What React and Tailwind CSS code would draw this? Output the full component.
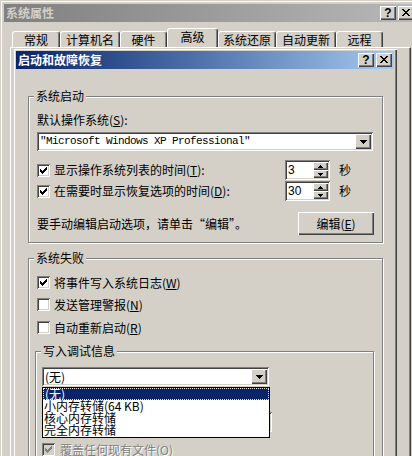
import React from "react";

const SUNKEN =
  "shadow-[inset_1px_1px_0_#808080,inset_-1px_-1px_0_#fff,inset_2px_2px_0_#404040,inset_-2px_-2px_0_#d4d0c8]";
const RAISED =
  "shadow-[inset_1px_1px_0_#fff,inset_-1px_-1px_0_#404040,inset_-2px_-2px_0_#808080]";
const CAPBTN =
  "shadow-[inset_1px_1px_0_#fff,inset_-1px_-1px_0_#404040,inset_-2px_-2px_0_#808080]";

function Check({ color = "#000" }) {
  const cols = [
    [3, 5],
    [4, 6],
    [5, 7],
    [6, 6],
    [7, 5],
    [8, 4],
    [9, 3],
  ];
  return (
    <svg
      width="13"
      height="13"
      viewBox="0 0 13 13"
      shapeRendering="crispEdges"
      className="absolute left-0 top-0"
    >
      {cols.map(([x, y]) => (
        <rect key={x} x={x} y={y} width="1" height="3" fill={color} />
      ))}
    </svg>
  );
}

function CheckBox({ checked, disabled }) {
  return (
    <span
      className={`relative inline-block w-[13px] h-[13px] shrink-0 ${
        disabled ? "bg-[#d4d0c8]" : "bg-white"
      } ${SUNKEN}`}
    >
      {checked && <Check color={disabled ? "#808080" : "#000"} />}
    </span>
  );
}

function PixelRows({ rows, color = "#000" }) {
  const w = rows[0].length;
  const h = rows.length;
  return (
    <svg width={w} height={h} viewBox={`0 0 ${w} ${h}`} shapeRendering="crispEdges">
      {rows.flatMap((r, y) =>
        [...r].map((c, x) =>
          c === "1" ? (
            <rect key={`${x}-${y}`} x={x} y={y} width="1" height="1" fill={color} />
          ) : null
        )
      )}
    </svg>
  );
}

const DOWN7 = ["1111111", "0111110", "0011100", "0001000"];
const UP5 = ["00100", "01110", "11111"];
const DOWN5 = ["11111", "01110", "00100"];
const CLOSE = [
  "11000011",
  "01100110",
  "00111100",
  "00011000",
  "00111100",
  "01100110",
  "11000011",
];

function CaptionButtons() {
  return (
    <div className="flex gap-[2px]">
      <div
        className={`w-[16px] h-[14px] bg-[#d4d0c8] ${CAPBTN} flex items-center justify-center font-['Liberation_Sans',sans-serif] font-bold text-[12px] leading-[12px] pb-[1px]`}
      >
        ?
      </div>
      <div
        className={`w-[16px] h-[14px] bg-[#d4d0c8] ${CAPBTN} flex items-center justify-center pb-[1px]`}
      >
        <PixelRows rows={CLOSE} />
      </div>
    </div>
  );
}

function Tab({ label, cls, selected }) {
  return (
    <div
      className={`relative flex items-center justify-center bg-[#d4d0c8] rounded-t-[3px] border-t border-l border-white border-r border-r-[#404040] shadow-[inset_-1px_0_0_#808080] leading-[12px] ${cls} ${
        selected ? "h-[19px] z-10 pb-[3px]" : "h-[16px]"
      }`}
    >
      {label}
    </div>
  );
}

function Group({ label, className, children }) {
  return (
    <div
      className={`relative border border-[#808080] shadow-[inset_1px_1px_0_#fff,1px_1px_0_#fff] ${className}`}
    >
      <span className="absolute left-[5px] -top-[7px] px-[2px] bg-[#d4d0c8] leading-[12px] h-[12px]">
        {label}
      </span>
      {children}
    </div>
  );
}

function ComboButton() {
  return (
    <div
      className={`w-[16px] h-[15px] bg-[#d4d0c8] ${RAISED} flex items-center justify-center`}
    >
      <PixelRows rows={DOWN7} />
    </div>
  );
}

function Spin({ value }) {
  return (
    <div className={`w-[45px] h-[20px] bg-white ${SUNKEN} flex p-[2px] shrink-0`}>
      <span className="flex-1 pl-[1px] leading-[16px] font-['Liberation_Sans',sans-serif] text-[12px]">
        {value}
      </span>
      <div className="w-[15px] flex flex-col">
        <div className={`h-[8px] bg-[#d4d0c8] ${RAISED} flex items-center justify-center`}>
          <PixelRows rows={UP5} />
        </div>
        <div className={`h-[8px] bg-[#d4d0c8] ${RAISED} flex items-center justify-center`}>
          <PixelRows rows={DOWN5} />
        </div>
      </div>
    </div>
  );
}

function CheckRow({ checked, children, className = "" }) {
  return (
    <div className={`h-[13px] flex items-center pl-[8px] ${className}`}>
      <CheckBox checked={checked} />
      <span className="ml-[4px] leading-[12px]">{children}</span>
    </div>
  );
}

export default function App() {
  return (
    <div className="relative w-[412px] h-[456px] overflow-hidden bg-[#d4d0c8] text-[12px] text-black font-['Noto_Sans_CJK_SC','Noto_Sans',sans-serif]">
      {/* Outer window: 系统属性 */}
      <div className="w-[420px] h-[470px] flex flex-col p-[4px] shadow-[inset_1px_1px_0_#d4d0c8,inset_2px_2px_0_#fff]">
        <div className="h-[18px] shrink-0 flex items-center justify-between pl-[2px] pr-[2px] bg-gradient-to-r from-[#808080] to-[#b8b8b8]">
          <span className="font-bold text-[#d4d0c8] leading-[12px]">系统属性</span>
          <CaptionButtons />
        </div>
        <div className="h-[25px] shrink-0 flex items-end pl-[8px]">
          <Tab label="常规" cls="w-[48px]" />
          <Tab label="计算机名" cls="w-[60px]" />
          <Tab label="硬件" cls="w-[47px]" />
          <Tab label="高级" cls="w-[51px]" selected />
          <Tab label="系统还原" cls="w-[58px]" />
          <Tab label="自动更新" cls="w-[60px]" />
          <Tab label="远程" cls="w-[47px]" />
        </div>
        <div className="flex-1 ml-[6px] mr-[5px] border-t border-l border-white border-r border-r-[#404040] shadow-[inset_-1px_0_0_#808080]" />
      </div>

      {/* Inner dialog: 启动和故障恢复 */}
      <div className="absolute left-[13px] top-[48px] w-[384px] h-[430px] p-[3px] flex flex-col bg-[#d4d0c8] shadow-[inset_1px_1px_0_#d4d0c8,inset_2px_2px_0_#fff,inset_-1px_-1px_0_#404040,inset_-2px_-2px_0_#808080]">
        <div className="h-[18px] shrink-0 flex items-center justify-between pl-[2px] pr-[2px] bg-gradient-to-r from-[#0a246a] to-[#a6caf0]">
          <span className="font-bold text-white leading-[12px]">启动和故障恢复</span>
          <CaptionButtons />
        </div>

        <div className="flex flex-col">
          {/* 系统启动 */}
          <Group label="系统启动" className="mt-[27px] ml-[12px] w-[355px] h-[147px]">
            <div className="mt-[17px] ml-[8px] leading-[12px] h-[12px]">
              默认操作系统(<span className="underline">S</span>):
            </div>
            <div
              className={`mt-[6px] ml-[8px] w-[336px] h-[19px] bg-white ${SUNKEN} flex items-center p-[2px]`}
            >
              <span className="flex-1 pl-[1px] font-['Liberation_Mono',monospace] text-[11px] tracking-[-0.6px] leading-[15px]">
                "Microsoft Windows XP Professional"
              </span>
              <ComboButton />
            </div>
            <div className="mt-[9px] h-[20px] flex items-center pl-[8px]">
              <CheckBox checked />
              <span className="ml-[4px] w-[231px] leading-[12px]">
                显示操作系统列表的时间(<span className="underline">T</span>):
              </span>
              <Spin value="3" />
              <span className="ml-[9px] leading-[12px]">秒</span>
            </div>
            <div className="mt-[1px] h-[20px] flex items-center pl-[8px]">
              <CheckBox checked />
              <span className="ml-[4px] w-[231px] leading-[12px]">
                在需要时显示恢复选项的时间(<span className="underline">D</span>):
              </span>
              <Spin value="30" />
              <span className="ml-[9px] leading-[12px]">秒</span>
            </div>
            <div className="mt-[11px] h-[23px] flex items-center justify-between pl-[8px] pr-[8px]">
              <span className="leading-[12px]">要手动编辑启动选项，请单击“编辑”。</span>
              <div
                className={`w-[76px] h-[23px] bg-[#d4d0c8] ${RAISED} flex items-center justify-center leading-[12px]`}
              >
                编辑(<span className="underline">E</span>)
              </div>
            </div>
          </Group>

          {/* 系统失败 */}
          <Group label="系统失败" className="mt-[15px] ml-[12px] w-[355px] h-[260px]">
            <CheckRow checked className="mt-[17px]">
              将事件写入系统日志(<span className="underline">W</span>)
            </CheckRow>
            <CheckRow className="mt-[9px]">
              发送管理警报(<span className="underline">N</span>)
            </CheckRow>
            <CheckRow className="mt-[10px]">
              自动重新启动(<span className="underline">R</span>)
            </CheckRow>

            {/* 写入调试信息 */}
            <Group label="写入调试信息" className="mt-[17px] ml-[6px] w-[339px] h-[150px]">
              <div className="relative mt-[15px] ml-[6px] w-[227px]">
                <div className={`h-[19px] bg-white ${SUNKEN} flex items-center p-[2px]`}>
                  <span className="flex-1 pl-[1px] leading-[15px]">(无)</span>
                  <ComboButton />
                </div>
                {/* Open drop-down list */}
                <div className="absolute left-0 top-[20px] z-20 w-[228px] h-[51px] bg-white border border-black flex flex-col">
                  <div className="h-[12px] bg-[#0a246a] text-white border border-dotted border-[#e8e8e8] leading-[10px] pl-[1px]">
                    (无)
                  </div>
                  <div className="h-[12px] leading-[12px] pl-[1px]">小内存转储(64 KB)</div>
                  <div className="h-[12px] leading-[12px] pl-[1px]">核心内存转储</div>
                  <div className="h-[12px] leading-[12px] pl-[1px]">完全内存转储</div>
                </div>
              </div>
              {/* space of the dump-file label, hidden by the open list */}
              <div className="mt-[7px] ml-[6px] h-[12px]" />
              <div className={`mt-[7px] ml-[6px] w-[230px] h-[20px] bg-white ${SUNKEN}`} />
              <div className="mt-[11px] ml-[6px] h-[13px] flex items-center">
                <CheckBox checked disabled />
                <span className="ml-[5px] leading-[12px] text-[#808080] [text-shadow:1px_1px_0_#fff]">
                  覆盖任何现有文件(<span className="underline">O</span>)
                </span>
              </div>
            </Group>
          </Group>
        </div>
      </div>
    </div>
  );
}
